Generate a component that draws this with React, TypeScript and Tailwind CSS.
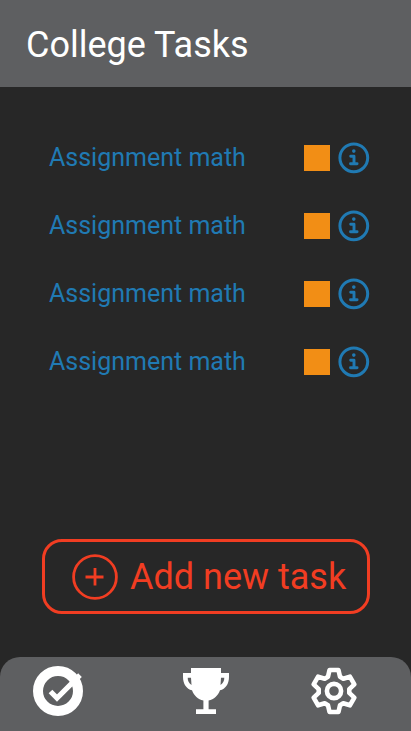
import React from "react";

const tasks = ["Assignment math", "Assignment math", "Assignment math", "Assignment math"];

function InfoIcon() {
  return (
    <svg viewBox="0 0 32 32" className="ml-2 size-8" fill="none">
      <circle cx="15.8" cy="15.8" r="13.9" stroke="#207ab3" strokeWidth="3" />
      <circle cx="15.8" cy="9.1" r="1.8" fill="#207ab3" />
      <path d="M12.7 14.2h3.300v7.600M12.500 21.700h6.600" stroke="#207ab3" strokeWidth="2.9" strokeLinecap="round" strokeLinejoin="round" />
    </svg>
  );
}

function TaskRow({ title }: { title: string }) {
  return (
    <li className="flex h-[68px] items-center">
      <span className="-mt-0.5 w-[255px] whitespace-nowrap text-[25px] leading-none text-[#207ab3]">{title}</span>
      <span className="size-[26px] bg-[#f28e15]" />
      <InfoIcon />
    </li>
  );
}

function CheckIcon() {
  return (
    <svg viewBox="0 0 52 52" className="size-[52px]" fill="none">
      <circle cx="25" cy="26" r="20" stroke="#fff" strokeWidth="10" />
      <path d="M17.500 26.500l6.500 6.500L47 10.200" stroke="#fff" strokeWidth="5.2" />
    </svg>
  );
}

function TrophyIcon() {
  return (
    <svg viewBox="0 0 46 46" className="size-[46px]" fill="#fff">
      <path
        fillRule="evenodd"
        d="M8 0h30v5h8v4c0 7-3.500 12-9 13.300C35 27.500 31 31.500 25.600 32.600V41.300H33V46H13v-4.700h7.400v-8.700C15 31.500 11 27.500 9 22.300 3.500 21 0 16 0 9V5h8zM4.700 9.700c0 3 1.100 5.500 3.800 7.200L8 9.700zM38 9.700l-.5 7.200c2.700-1.700 3.800-4.200 3.800-7.200z"
      />
    </svg>
  );
}

// Outline vertices of a six-toothed cog: [degrees from tooth centre, radius].
const toothProfile: [number, number][] = [[-23, 15.4], [-12, 21.4], [12, 21.4], [23, 15.4]];
const cogPoints = [0, 60, 120, 180, 240, 300]
  .flatMap((turn) =>
    toothProfile.map(([offset, radius]) => {
      const a = ((turn + offset) * Math.PI) / 180;
      return `${(radius * Math.sin(a)).toFixed(2)},${(-radius * Math.cos(a)).toFixed(2)}`;
    })
  )
  .join(" ");

function GearIcon() {
  return (
    <svg viewBox="-24 -24 48 48" className="size-12" fill="none" stroke="#fff">
      <polygon points={cogPoints} strokeWidth="4.6" strokeLinejoin="round" />
      <circle r="7.1" strokeWidth="4.600" />
    </svg>
  );
}

export default function App() {
  return (
    <div className="flex h-[731px] w-[411px] flex-col overflow-hidden bg-[#272727] font-['Roboto',sans-serif]">
      <header className="flex h-[87px] items-center bg-[#5e5f61] pl-[26px]">
        <h1 className="mt-0.5 text-[36px] leading-[44px] text-white">College Tasks</h1>
      </header>
      <ul className="mt-[37px] flex flex-col pl-[49px]">
        {tasks.map((title, i) => (
          <TaskRow key={i} title={title} />
        ))}
      </ul>
      <button className="ml-[42px] mt-[143px] flex h-[75px] w-[328px] items-center rounded-[20px] border-[3px] border-[#f13d22] pl-[27px] text-[#f13d22]">
        <svg viewBox="0 0 46 46" className="size-[46px] shrink-0" fill="none" stroke="currentColor">
          <circle cx="23" cy="23" r="21.4" strokeWidth="2.800" />
          <path d="M23 14v17.500M13.500 23h18" strokeWidth="2.800" />
        </svg>
        <span className="ml-3 whitespace-nowrap text-[36px] leading-none">Add new task</span>
      </button>
      <nav className="mt-auto flex h-[74px] rounded-t-[20px] bg-[#5e5f61]">
        <span className="ml-[33px] mt-2"><CheckIcon /></span>
        <span className="ml-[98px] mt-[11px]"><TrophyIcon /></span>
        <span className="ml-[81px] mt-[9.500px]"><GearIcon /></span>
      </nav>
    </div>
  );
}
